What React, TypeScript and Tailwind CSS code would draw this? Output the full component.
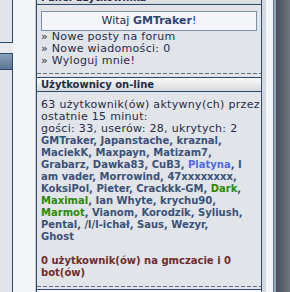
import React from "react";

const G = ({ children }: { children: React.ReactNode }) => (
  <span className="text-[#2b8a05]">{children}</span>
);

export default function App() {
  return (
    <div className="w-[290px] h-[292px] overflow-hidden bg-[#f3f5f8] flex font-['DejaVu_Sans',sans-serif] text-[10px] leading-[12px] text-[#1f2d4a]">
      {/* left column */}
      <div className="w-[35px] flex flex-col shrink-0">
        <div className="w-[13px] h-[43px] bg-[#e1e4e9] border-r border-b border-[#2d4a6d]" />
        <div className="w-[13px] h-[10px] bg-[#e9ebee]" />
        <div className="w-[13px] flex-1 flex flex-col border-t border-r border-[#2d4a6d] bg-[#e1e4e9]">
          <div className="h-[16px] bg-[linear-gradient(to_bottom,#8b9fb5,#5b7290)] border-b border-[#2d4a6d]" />
        </div>
      </div>
      <div className="w-px bg-[#c9cdd3] shrink-0" />
      {/* center */}
      <div className="w-[226px] shrink-0 border-x border-[#2d4a6d] bg-[#e1e4e9] flex flex-col">
        <div className="mt-[-10px] h-[15px] border-y border-[#2d4a6d] bg-[linear-gradient(to_bottom,#fbfbfb,#d6d8db)] pl-1 font-bold text-[#1e2d48] leading-[13px]">
          Panel użytkownika
        </div>
        <div className="px-1 pt-[6px] pb-[6px] text-[11px] leading-[12px]">
          <div className="h-[20px] border border-[#7d90a8] bg-[#f3f5f8] text-center text-[11px] leading-[18px]">
            Witaj <b className="text-[#2e4570]">GMTraker</b>!
          </div>
          <div className="tracking-[0.3px]">» Nowe posty na forum</div>
          <div className="tracking-[0.3px]">» Nowe wiadomości: 0</div>
          <div className="tracking-[0.3px]">» Wyloguj mnie!</div>
        </div>
        <div className="h-px bg-[linear-gradient(to_right,#5f6f86_4px,transparent_4px)] bg-[length:6px_1px]" />
        <div className="mt-[3px] h-[15px] border-y border-[#2d4a6d] bg-[linear-gradient(to_bottom,#fbfbfb,#d6d8db)] pl-1 font-bold text-[#1e2d48] leading-[13px]">
          Użytkownicy on-line
        </div>
        <div className="px-1 pt-[7px] pb-[7px] whitespace-nowrap">
          <div className="text-[11px] tracking-[0.3px]">
            <div>63 użytkownik(ów) aktywny(ch) przez</div>
            <div>ostatnie 15 minut:</div>
            <div>gości: 33, userów: 28, ukrytych: 2</div>
          </div>
          <div className="font-bold text-[#3a5278]">
            <div>GMTraker, Japanstache, kraznal,</div>
            <div>MaciekK, Maxpayn, Matizam7,</div>
            <div>
              Grabarz, Dawka83, CuB3, <span className="text-[#5468e6]">Platyna</span>, I
            </div>
            <div>am vader, Morrowind, 47xxxxxxxx,</div>
            <div>
              KoksiPol, Pieter, Crackkk-GM, <G>Dark</G>,
            </div>
            <div>
              <G>Maximal</G>, Ian Whyte, krychu90,
            </div>
            <div>
              <G>Marmot</G>, Vianom, Korodzik, Syliush,
            </div>
            <div>Pental, /l/l-ichał, Saus, Wezyr,</div>
            <div>Ghost</div>
          </div>
          <div className="h-[12px]" />
          <div className="font-bold text-[#6e2c2c]">
            <div>0 użytkownik(ów) na gmczacie i 0</div>
            <div>bot(ów)</div>
          </div>
        </div>
        <div className="h-px bg-[linear-gradient(to_right,#5f6f86_4px,transparent_4px)] bg-[length:6px_1px]" />
        <div className="mt-[2px] flex-1 border-t border-[#2d4a6d] bg-[#fbfbfb]" />
      </div>
      {/* right edge */}
      <div className="w-[4px] bg-[#d5d8dc] shrink-0" />
      <div className="w-[7px] bg-[#f3f5f8] shrink-0" />
      <div className="w-px bg-[#5d7898] shrink-0" />
      <div className="w-[2px] bg-[#93a9c0] shrink-0" />
      <div className="w-[14px] bg-[linear-gradient(to_right,#47525e,#6d747c)] shrink-0" />
    </div>
  );
}
